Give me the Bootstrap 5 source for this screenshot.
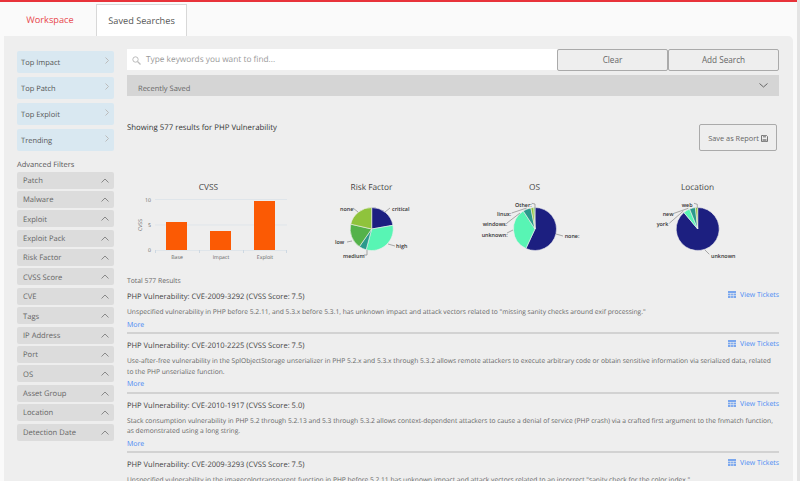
<!DOCTYPE html>
<html lang="en">
<head>
    <meta charset="UTF-8">
    <title>Saved Searches</title>
    <link href="https://cdn.jsdelivr.net/npm/bootstrap@5.3.0/dist/css/bootstrap.min.css" rel="stylesheet">
    <style>
        html, body { height: 100%; overflow: hidden; }
        body { background: #fafafa; font-family: "Open Sans", sans-serif; color: #555; border-top: 2px solid #e8333a; font-size: 8px; text-rendering: geometricPrecision; }
        .tab-strip { height: 34px; padding-left: 4px; }
        .tab-link { display: block; font-size: 9.2px; line-height: 32px; text-decoration: none; height: 32px; margin-top: 2px; }
        .tab-work { width: 92px; text-align: center; color: #e8474c; }
        .tab-saved { width: 91px; text-align: center; color: #555; background: #fff; border: 1px solid #d8d8d8; border-bottom: 0; }
        .work-panel { background: #eee; margin: 0 7px 0 4px; height: 445px; overflow: hidden; border-top-right-radius: 5px; padding: 13px 14px 0 13px; gap: 13px; }
        .side-col { width: 97px; flex: none; padding-top: 2px; }
        .quick-item { height: 22px; margin-bottom: 4px; background: #d9e8f1; border-radius: 2px; padding: 0 5px 0 4px; font-size: 7.5px; color: #555; }
        .quick-item svg { margin-top: -3px; }
        .filter-head { font-size: 7.5px; line-height: 12px; margin: 7px 0 1.5px; padding-top: 1px; height: 12px; color: #555; }
        .filter-item { height: 17px; margin-bottom: 2.4px; background: #dcdcdc; border-radius: 2px; padding: 0 5px 0 6px; font-size: 7.6px; color: #666; }
        .item-label { padding-top: 3px; }
        .main-col { flex: 1; min-width: 0; }
        .search-box { height: 21px; background: #fff; padding: 1px 0 0 5px; font-size: 8.3px; color: #999; gap: 5px; }
        .plain-btn { width: 111px; height: 22px; background: #eee; border: 1px solid #aaa; border-radius: 2px; font-size: 8.2px; color: #666; padding: 0; }
        .saved-bar { height: 21px; margin-top: 4px; background: #d5d5d5; padding: 0 11px; font-size: 7.5px; color: #666; }
        .saved-label { padding-top: 8px; }
        .show-row { height: 84px; padding-top: 25px; }
        .show-text { font-size: 7.8px; color: #333; line-height: 14px; }
        .report-btn { width: 78px; height: 27px; margin: 3px 2px 0 0; background: #eee; border: 1px solid #aaa; border-radius: 2px; font-size: 7.4px; color: #666; padding: 2px 0 0; }
        .chart-row { height: 93px; }
        .chart-cell { width: 25%; }
        .chart-name { font-size: 8.3px; line-height: 13px; padding-top: 1px; color: #444; text-align: center; margin: 0; }
        .chart-svg { display: block; width: 163px; height: 79px; overflow: visible; }
        .chart-svg text { font-family: "Open Sans", sans-serif; font-size: 5.4px; font-weight: 600; fill: #333; }
        .chart-svg .axis-txt { fill: #666; font-size: 5.2px; font-weight: 400; }
        .total-line { font-size: 6.8px; line-height: 12px; height: 12px; padding-top: 1.5px; color: #666; }
        .result-item { border-bottom: 2px solid #d2d2d2; padding-bottom: .5px; }
        .result-title { font-size: 7.56px; line-height: 12px; color: #444; margin-top: 6px; }
        .ticket-link { font-size: 6.9px; line-height: 12px; color: #4a8af4; text-decoration: none; gap: 4px; margin-top: 5px; }
        .ticket-icon { margin-top: -3px; }
        .result-text { font-size: 6.68px; line-height: 10.5px; color: #666; margin: 4px 0 2px; }
        .more-link { font-size: 7px; line-height: 12px; color: #4a8af4; text-decoration: none; display: block; }
        .scroll-strip { position: fixed; top: 0; right: 0; width: 3px; height: 100%; background: #e4e4e4; }
    </style>
</head>
<body>
    <div class="tab-strip d-flex">
        <a class="tab-link tab-work" href="#">Workspace</a>
        <a class="tab-link tab-saved" href="#">Saved Searches</a>
    </div>
    <div class="work-panel d-flex">
        <div class="side-col">
            <div class="quick-item d-flex align-items-center justify-content-between"><span class="item-label">Top Impact</span> <svg width="4" height="7" viewBox="0 0 4 7"><path d="M.5.5 3.5 3.5 .5 6.5" fill="none" stroke="#bbb"/></svg></div>
            <div class="quick-item d-flex align-items-center justify-content-between"><span class="item-label">Top Patch</span> <svg width="4" height="7" viewBox="0 0 4 7"><path d="M.5.5 3.5 3.5 .5 6.5" fill="none" stroke="#bbb"/></svg></div>
            <div class="quick-item d-flex align-items-center justify-content-between"><span class="item-label">Top Exploit</span> <svg width="4" height="7" viewBox="0 0 4 7"><path d="M.5.5 3.5 3.5 .5 6.5" fill="none" stroke="#bbb"/></svg></div>
            <div class="quick-item d-flex align-items-center justify-content-between"><span class="item-label">Trending</span> <svg width="4" height="7" viewBox="0 0 4 7"><path d="M.5.5 3.5 3.5 .5 6.5" fill="none" stroke="#bbb"/></svg></div>
            <div class="filter-head">Advanced Filters</div>
            <div id="filterList"></div>
        </div>
        <div class="main-col">
            <div class="d-flex">
                <div class="search-box flex-grow-1 d-flex align-items-center">
                    <svg width="9" height="9" viewBox="0 0 9 9"><circle cx="3.5" cy="3.5" r="2.7" fill="none" stroke="#bbb"/><path d="M5.5 5.5 8.5 8.5" stroke="#bbb" stroke-width="1.2"/></svg>
                    Type keywords you want to find...
                </div>
                <button class="plain-btn">Clear</button>
                <button class="plain-btn">Add Search</button>
            </div>
            <div class="saved-bar d-flex align-items-center justify-content-between">
                <span class="saved-label">Recently Saved</span>
                <svg width="9" height="5" viewBox="0 0 9 5"><path d="M.5.5 4.5 4 8.5.5" fill="none" stroke="#666"/></svg>
            </div>
            <div class="show-row d-flex justify-content-between align-items-start">
                <div class="show-text">Showing 577 results for PHP Vulnerability</div>
                <button class="report-btn">Save as Report
                    <svg width="7" height="7" viewBox="0 0 7 7"><path d="M.5.5H5.5L6.5 1.5V6.5H.5Z" fill="none" stroke="#777"/><path d="M2 .5H5V2.5H2ZM1.5 4H5.5V6.5H1.5Z" fill="#999"/></svg>
                </button>
            </div>
            <div class="chart-row d-flex">
                <div class="chart-cell">
                    <p class="chart-name">CVSS</p>
                    <svg class="chart-svg" viewBox="0 0 163 79">
                        <path d="M28 5.5H160M28 31H160M28 56.5H160" stroke="#dfe5ea" fill="none"/>
                        <rect x="39" y="28" width="21" height="28" fill="#fb5a04"/>
                        <rect x="83" y="37" width="21" height="19" fill="#fb5a04"/>
                        <rect x="127" y="7" width="21" height="49" fill="#fb5a04"/>
                        <path d="M28.5 56V59M72.5 56V59M116.5 56V59M159.5 56V59" stroke="#cdd8e2"/>
                        <text class="axis-txt" x="24" y="7.5" text-anchor="end">10</text>
                        <text class="axis-txt" x="24" y="33" text-anchor="end">5</text>
                        <text class="axis-txt" x="24" y="58" text-anchor="end">0</text>
                        <text class="axis-txt" x="15" y="31" text-anchor="middle" transform="rotate(-90 15 31)">CVSS</text>
                        <text class="axis-txt" x="50" y="65" text-anchor="middle">Base</text>
                        <text class="axis-txt" x="94" y="65" text-anchor="middle">Impact</text>
                        <text class="axis-txt" x="138" y="65" text-anchor="middle">Exploit</text>
                    </svg>
                </div>
                <div class="chart-cell">
                    <p class="chart-name">Risk Factor</p>
                    <svg class="chart-svg" viewBox="0 0 163 79" id="riskPie">
                        <path d="M95 18 100 14M98 50 105 52M77 56 77 61 74 61M62 47 57 48M68 18 63 14" stroke="#888" stroke-width=".7" fill="none"/>
                        <text x="102" y="17">critical</text>
                        <text x="106" y="54">high</text>
                        <text x="53" y="64">medium</text>
                        <text x="45" y="50">low</text>
                        <text x="50" y="17">none</text>
                    </svg>
                </div>
                <div class="chart-cell">
                    <p class="chart-name">OS</p>
                    <svg class="chart-svg" viewBox="0 0 163 79" id="osPie">
                        <path d="M103 40 110 42M60 36 54 39M67 19 54 29M73.7 14 58.7 19M78.7 9.3 82 10 82 14" stroke="#888" stroke-width=".7" fill="none"/>
                        <text x="111.7" y="44">none:</text>
                        <text x="28.7" y="42.7">unknown:</text>
                        <text x="29.7" y="32">windows:</text>
                        <text x="44" y="22">linux:</text>
                        <text x="62" y="13">Other:</text>
                    </svg>
                </div>
                <div class="chart-cell">
                    <p class="chart-name">Location</p>
                    <svg class="chart-svg" viewBox="0 0 163 79" id="locPie">
                        <path d="M89 56 93.3 60.3M67.3 17 53.3 29.3M72.3 14.3 58 19.3M78 9.3 81.3 10.3 81.3 14.3" stroke="#888" stroke-width=".7" fill="none"/>
                        <text x="95" y="64">unknown</text>
                        <text x="40.7" y="32">york</text>
                        <text x="46.7" y="22">new</text>
                        <text x="65.7" y="13">web</text>
                    </svg>
                </div>
            </div>
            <div class="total-line">Total 577 Results</div>
            <div id="resultList"></div>
        </div>
    </div>
    <div class="scroll-strip"></div>

    <script>
        const filters = ["Patch", "Malware", "Exploit", "Exploit Pack", "Risk Factor", "CVSS Score", "CVE", "Tags", "IP Address", "Port", "OS", "Asset Group", "Location", "Detection Date"];
        document.getElementById("filterList").innerHTML = filters.map(f =>
            `<div class="filter-item d-flex align-items-center justify-content-between"><span class="item-label">${f}</span>
                <svg width="8" height="5" viewBox="0 0 8 5"><path d="M.5 4.5 4 1 7.5 4.5" fill="none" stroke="#888"/></svg></div>`).join("");

        const results = [
            ["CVE-2009-3292", "7.5", 'Unspecified vulnerability in PHP before 5.2.11, and 5.3.x before 5.3.1, has unknown impact and attack vectors related to "missing sanity checks around exif processing."'],
            ["CVE-2010-2225", "7.5", "Use-after-free vulnerability in the SplObjectStorage unserializer in PHP 5.2.x and 5.3.x through 5.3.2 allows remote attackers to execute arbitrary code or obtain sensitive information via serialized data, related to the PHP unserialize function."],
            ["CVE-2010-1917", "5.0", "Stack consumption vulnerability in PHP 5.2 through 5.2.13 and 5.3 through 5.3.2 allows context-dependent attackers to cause a denial of service (PHP crash) via a crafted first argument to the fnmatch function, as demonstrated using a long string."],
            ["CVE-2009-3293", "7.5", 'Unspecified vulnerability in the imagecolortransparent function in PHP before 5.2.11 has unknown impact and attack vectors related to an incorrect "sanity check for the color index."']
        ];
        const gridIcon = `<svg class="ticket-icon" width="8" height="7" viewBox="0 0 8 7"><path d="M0 0H8V7H0Z" fill="#7aa7ee"/><path d="M0 2.5H8M0 4.5H8M2.7 2V7M5.3 2V7" stroke="#eee" stroke-width=".6"/></svg>`;
        document.getElementById("resultList").innerHTML = results.map(r =>
            `<div class="result-item">
                <div class="d-flex justify-content-between align-items-start">
                    <div class="result-title">PHP Vulnerability: ${r[0]} (CVSS Score: ${r[1]})</div>
                    <a class="ticket-link d-flex align-items-center" href="#">${gridIcon} View Tickets</a>
                </div>
                <div class="result-text">${r[2]}</div>
                <a class="more-link" href="#">More</a>
            </div>`).join("");

        function drawPie(id, cx, cy, rad, slices) {
            const svg = document.getElementById(id);
            let from = 0;
            let out = "";
            slices.forEach(s => {
                const to = from + s[0];
                const a = (from - 90) * Math.PI / 180, b = (to - 90) * Math.PI / 180;
                const big = s[0] > 180 ? 1 : 0;
                out += `<path d="M${cx} ${cy}L${(cx + rad * Math.cos(a)).toFixed(2)} ${(cy + rad * Math.sin(a)).toFixed(2)}A${rad} ${rad} 0 ${big} 1 ${(cx + rad * Math.cos(b)).toFixed(2)} ${(cy + rad * Math.sin(b)).toFixed(2)}Z" fill="${s[1]}" stroke="#eee" stroke-width=".6"/>`;
                from = to;
            });
            svg.insertAdjacentHTML("afterbegin", out);
        }
        const navy = "#1c1f80", mint = "#58f5b4", teal = "#2a9a8c", green = "#54b24a", lime = "#8fc33c";
        drawPie("riskPie", 81.7, 35, 21.5, [[80, navy], [115, mint], [20, teal], [68, green], [77, lime]]);
        drawPie("osPie", 82, 35, 21.5, [[205, navy], [122, mint], [22, teal], [8, lime], [3, green]]);
        drawPie("locPie", 81.7, 35, 21.5, [[320, navy], [18, mint], [16, teal], [6, lime]]);
    </script>
</body>
</html>
